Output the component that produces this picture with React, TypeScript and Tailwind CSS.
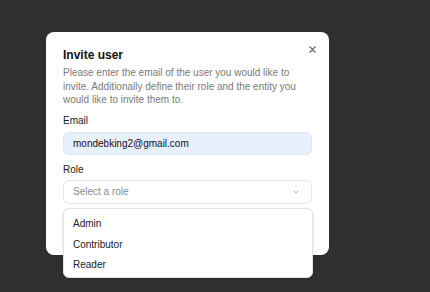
import React from "react";

const font = { fontFamily: "'Liberation Sans', Arial, sans-serif" };

export default function App() {
  return (
    <div className="w-[430px] h-[292px] bg-[#2f2f2f] overflow-hidden pl-[46px] pt-[32px]" style={font}>
      <div className="relative w-[283px] h-[223px] bg-white rounded-[8px] px-[17px] pt-[15px] flex flex-col">
        <button className="absolute right-[13px] top-[13px] w-[8px] h-[8px] flex items-center justify-center text-[#666]">
          <svg width="7" height="7" viewBox="0 0 7 7" fill="none" stroke="currentColor" strokeWidth="1.1" strokeLinecap="round">
            <path d="M0.75 0.75L6.25 6.25M6.25 0.75L0.75 6.25" />
          </svg>
        </button>
        <h2 className="text-[12px] font-bold text-[#111] leading-[16px]">Invite user</h2>
        <p className="text-[10px] text-[#7a7a7a] leading-[13.5px] mt-[3px]">
          Please enter the email of the user you would like to invite. Additionally define their role and the entity you would like to invite them to.
        </p>
        <label className="mt-[7px] text-[10px] text-[#222] leading-[14px]">Email</label>
        <div className="mt-[4px] h-[23.5px] rounded-[6px] bg-[#e8effd] border border-[#dfe5f0] flex items-center px-[9px] text-[10px] text-[#111]">
          mondebking2@gmail.com
        </div>
        <label className="mt-[7.5px] text-[10px] text-[#222] leading-[14px]">Role</label>
        <div className="relative mt-[3px]">
          <div className="h-[24px] rounded-[6px] bg-white border border-[#e6e6e6] flex items-center justify-between px-[9px] text-[10px] text-[#8a8a8a]">
            <span>Select a role</span>
            <svg width="6" height="4" viewBox="0 0 6 4" fill="none" stroke="#a8a8a8" strokeWidth="0.9" strokeLinecap="round" strokeLinejoin="round" className="mr-[3px]">
              <path d="M0.75 0.75L3 3L5.25 0.75" />
            </svg>
          </div>
          <div className="absolute left-0 top-[28px] w-[250px] h-[70px] bg-white rounded-[6px] border border-[#e3e3e3] shadow-[0_1px_3px_rgba(0,0,0,0.15)] pt-[5px] flex flex-col">
            {["Admin", "Contributor", "Reader"].map((r) => (
              <div key={r} className="h-[20.5px] flex items-center px-[9px] text-[10px] text-[#222]">{r}</div>
            ))}
          </div>
        </div>
      </div>
    </div>
  );
}
